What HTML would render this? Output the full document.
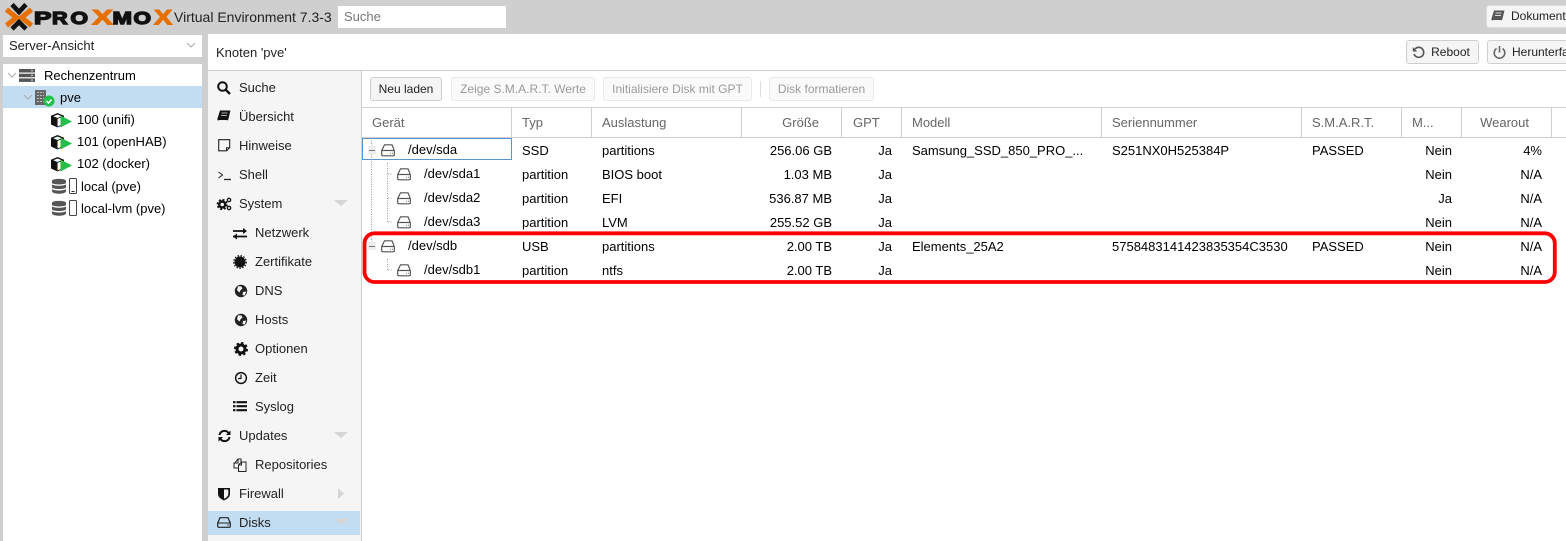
<!DOCTYPE html>
<html><head><meta charset="utf-8"><style>
html,body{margin:0;padding:0}
body{width:1566px;height:541px;overflow:hidden;position:relative;background:#cfcfcf;font:13px "Liberation Sans",sans-serif;color:#000}
.b{position:absolute;box-sizing:border-box}
.t{position:absolute;white-space:nowrap;height:20px;line-height:20px;margin-top:1px}
.r{text-align:right}
.h{color:#666}
.n{color:#222}
.btn{position:absolute;box-sizing:border-box;height:24px;border:1px solid #cfcfcf;border-radius:3px;background:#f5f5f5;line-height:22px;text-align:center;color:#222;white-space:nowrap;overflow:hidden;font-size:12px}
.dis{border-color:#e9e9e9;background:#fafafa;color:#9a9a9a}
svg{position:absolute;overflow:visible}
.sep{position:absolute;top:108px;width:1px;height:29px;background:#cfcfcf}
</style></head><body>
<svg width="0" height="0" style="position:absolute"><defs>
<g id="hdd" fill="none" stroke="#555" stroke-width="1.200"><path d="M3.500 .8h7.500l2.300 5.700v4.300a1 1 0 0 1-1 1H1.700a1 1 0 0 1-1-1V6.500z"/><path d="M.7 6.500h12.600"/><path d="M9 9.300h1M11 9.300h1" stroke="#888"/></g>
<g id="vm"><path d="M6.500 0l6.500 2.800v8.700l-6.500 3-6.500-3V2.800z" fill="#111"/><path d="M6.500 1.500l4.200 1.700-4.200 1.800-4.200-1.800z" fill="#fff"/><path d="M7 5.800l3.500-1.500v7.500L7 13.300z" fill="#fff"/><path d="M6.400 5.600v8" stroke="#c98a1e" stroke-width=".9"/><path d="M9.500 2.500l11.500 6-11.500 6z" fill="#21bf4b"/></g>
<g id="db"><path d="M0 2.800C0 .2 14 .2 14 2.800v2C14 7 0 7 0 4.800z" fill="#555"/><path d="M0 6.300C1 8.300 13 8.300 14 6.300v3.200C13 11.500 1 11.500 0 9.500z" fill="#555"/><path d="M0 11C1 13 13 13 14 11v2.500C13 16.500 1 16.500 0 13.500z" fill="#555"/><rect x="17.500" y=".5" width="7" height="15" rx="1" fill="#fff" stroke="#444"/></g>
<path id="chev" d="M0 0l4 4 4-4" fill="none" stroke="#aaa" stroke-width="1"/>
<g id="globe"><circle cx="7" cy="7" r="6.200" fill="#222"/><path d="M4 2.200l3.500.3 1 2-2 1.800-1 2.200-2.500-2.300zM9 8l3.300-.5-1.700 4L8.500 11z" fill="#f5f5f5"/></g>
<path id="tri" d="M0 0h14l-7 6z" fill="#d5d5d5"/>
</defs></svg>

<!-- logo -->
<svg style="left:0;top:0" width="176" height="34" viewBox="0 0 176 34">
<path d="M12 4.500l7 7.500 7-7.500M12 29l7-7 7 7" fill="none" stroke="#111" stroke-width="4.600"/>
<path d="M6.500 9.500l10 8-10 8M31.500 9.500l-10 8 10 8" fill="none" stroke="#e57000" stroke-width="5"/>
<g font-family="Liberation Sans" font-weight="700" fill="#111" stroke="#111" stroke-width="1.400">
<text transform="translate(34 24) scale(1.450 1)" font-size="18">P</text>
<text transform="translate(52 24) scale(1.200 1)" font-size="18">R</text>
<text transform="translate(70.500 24) scale(1.250 1)" font-size="18">O</text>
<text transform="translate(92 24.500) scale(1.500 1)" font-size="21" fill="#e57000" stroke="#e57000" stroke-width="1">X</text>
<text transform="translate(112.500 24) scale(1.300 1)" font-size="18">M</text>
<text transform="translate(133.500 24) scale(1.250 1)" font-size="18">O</text>
<text transform="translate(154 24.500) scale(1.300 1)" font-size="21" fill="#e57000" stroke="#e57000" stroke-width="1">X</text>
</g>
</svg>
<div class="t" style="left:174px;top:6px;color:#222;font-size:14px">Virtual Environment 7.3-3</div>
<div class="b" style="left:338px;top:6px;width:168px;height:22px;background:#fff"></div>
<div class="t" style="left:344px;top:6px;color:#777">Suche</div>

<div class="btn" style="left:1486px;top:5px;width:90px;height:23px;border-color:#ddd;text-align:left;padding-left:24px;line-height:21px">Dokumentation</div>
<svg style="left:1491px;top:10px" width="14" height="13" viewBox="0 0 14 13"><path d="M3 .5h10.500L11 10.500H1.500q-1.500 0-1-2z" fill="#555"/><path d="M1.800 10.500h8.700" stroke="#eee"/><path d="M4.500 3h6M4 5.500h6" stroke="#ddd"/></svg>

<!-- left -->
<div class="b" style="left:3px;top:35px;width:199px;height:22px;background:#fff"></div>
<div class="t" style="left:9px;top:35px;color:#222">Server-Ansicht</div>
<svg style="left:187px;top:43px" width="8" height="5"><use href="#chev"/></svg>
<div class="b" style="left:3px;top:64px;width:199px;height:477px;background:#fff"></div>
<div class="b" style="left:3px;top:86px;width:199px;height:22px;background:#c2ddf2"></div>
<svg style="left:8px;top:73px" width="8" height="5"><use href="#chev"/></svg>
<svg style="left:24px;top:95px" width="8" height="5"><use href="#chev"/></svg>
<svg style="left:19px;top:69px" width="16" height="13"><rect width="16" height="3.500" fill="#555"/><rect y="4.700" width="16" height="3.500" fill="#555"/><rect y="9.400" width="16" height="3.500" fill="#555"/><path d="M12 1.700h2M12 6.400h2M12 11.100h2" stroke="#ddd"/></svg>
<div class="t" style="left:44px;top:65px">Rechenzentrum</div>
<svg style="left:35px;top:90px" width="20" height="17"><rect width="11" height="15" fill="#666"/><path d="M2 2.500h7M2 5.500h7M2 8.500h7M2 11.500h7" stroke="#bbb" stroke-dasharray="2 1"/><circle cx="14" cy="11" r="5.500" fill="#21bf4b"/><path d="M11.500 11l2 2 3-3.500" fill="none" stroke="#fff" stroke-width="1.500"/></svg>
<div class="t" style="left:60px;top:87px">pve</div>
<svg style="left:51px;top:113px" width="21" height="15"><use href="#vm"/></svg>
<div class="t" style="left:77px;top:109px">100 (unifi)</div>
<svg style="left:51px;top:135px" width="21" height="15"><use href="#vm"/></svg>
<div class="t" style="left:77px;top:131px">101 (openHAB)</div>
<svg style="left:51px;top:157px" width="21" height="15"><use href="#vm"/></svg>
<div class="t" style="left:77px;top:153px">102 (docker)</div>
<svg style="left:52px;top:178px" width="26" height="16"><use href="#db"/><path d="M19.500 13.500h3" stroke="#222"/></svg>
<div class="t" style="left:81px;top:176px">local (pve)</div>
<svg style="left:52px;top:200px" width="26" height="16"><use href="#db"/></svg>
<div class="t" style="left:81px;top:198px">local-lvm (pve)</div>

<!-- content -->
<div class="b" style="left:208px;top:34px;width:1358px;height:507px;background:#fff"></div>
<div class="t" style="left:216px;top:42px;color:#222">Knoten 'pve'</div>
<div class="btn" style="left:1406px;top:40px;width:73px;padding-left:16px">Reboot</div>
<svg style="left:1412px;top:46px" width="13" height="13" viewBox="0 0 13 13"><path d="M3 3a5 5 0 1 1-1 5" fill="none" stroke="#555" stroke-width="1.600"/><path d="M.8 1v4.500h4.500z" fill="#555"/></svg>
<div class="btn" style="left:1487px;top:40px;width:100px;text-align:left;padding-left:24px">Herunterfahren</div>
<svg style="left:1493px;top:46px" width="13" height="13" viewBox="0 0 13 13"><path d="M3.500 2.500a5.300 5.300 0 1 0 6 0" fill="none" stroke="#666" stroke-width="1.600"/><path d="M6.500 0v6.500" stroke="#666" stroke-width="1.600"/></svg>
<div class="b" style="left:208px;top:70px;width:1358px;height:1px;background:#cfcfcf"></div>

<!-- nav -->
<div class="b" style="left:208px;top:71px;width:154px;height:470px;background:#f5f5f5;border-right:1px solid #cfcfcf"></div>
<div class="b" style="left:208px;top:511px;width:152px;height:24px;background:#c2ddf2"></div>
<div class="t n" style="left:239px;top:77px">Suche</div>
<div class="t n" style="left:239px;top:106px">Übersicht</div>
<div class="t n" style="left:239px;top:135px">Hinweise</div>
<div class="t n" style="left:239px;top:164px">Shell</div>
<div class="t n" style="left:239px;top:193px">System</div>
<div class="t n" style="left:255px;top:222px">Netzwerk</div>
<div class="t n" style="left:255px;top:251px">Zertifikate</div>
<div class="t n" style="left:255px;top:280px">DNS</div>
<div class="t n" style="left:255px;top:309px">Hosts</div>
<div class="t n" style="left:255px;top:338px">Optionen</div>
<div class="t n" style="left:255px;top:367px">Zeit</div>
<div class="t n" style="left:255px;top:396px">Syslog</div>
<div class="t n" style="left:239px;top:425px">Updates</div>
<div class="t n" style="left:255px;top:454px">Repositories</div>
<div class="t n" style="left:239px;top:483px">Firewall</div>
<div class="t n" style="left:239px;top:512px">Disks</div>
<!-- nav icons -->
<svg style="left:217px;top:81px" width="14" height="14"><circle cx="5.500" cy="5.500" r="4.300" fill="none" stroke="#111" stroke-width="2"/><path d="M8.500 8.500l4.500 4.500" stroke="#111" stroke-width="2.400"/></svg>
<svg style="left:217px;top:110px" width="14" height="13" viewBox="0 0 14 13"><path d="M3 .5h10.500L11 10.500H1.500q-1.500 0-1-2z" fill="#111"/><path d="M1.800 10.500h8.700" stroke="#eee"/><path d="M4.500 3h6M4 5.500h6" stroke="#aaa"/></svg>
<svg style="left:218px;top:139px" width="13" height="13"><path d="M.7 .7h11v8L8.500 11.800H.7z" fill="none" stroke="#222" stroke-width="1.100"/><path d="M8.500 11.500V8.700h3" fill="none" stroke="#222"/></svg>
<svg style="left:218px;top:171px" width="14" height="10"><path d="M.5 1l4 3-4 3" fill="none" stroke="#222"/><path d="M6 8.500h7" stroke="#222" stroke-width="1.300"/></svg>
<svg style="left:217px;top:197px" width="15" height="14"><circle cx="5.200" cy="7.500" r="3" fill="none" stroke="#111" stroke-width="2.400"/><circle cx="5.200" cy="7.500" r="4.800" fill="none" stroke="#111" stroke-width="1.600" stroke-dasharray="2 1.800"/><circle cx="12" cy="3" r="1.700" fill="none" stroke="#111" stroke-width="1.300"/><circle cx="12" cy="11" r="1.700" fill="none" stroke="#111" stroke-width="1.300"/></svg>
<svg style="left:233px;top:228px" width="14" height="11"><path d="M0 3h11M0 8.500h14" stroke="#111" stroke-width="1.800"/><path d="M10 0l4 3-4 3zM4 5.500L0 8.500l4 3z" fill="#111"/></svg>
<svg style="left:233px;top:255px" width="14" height="14"><circle cx="7" cy="7" r="5.500" fill="#111"/><circle cx="7" cy="7" r="6.300" fill="none" stroke="#111" stroke-width="1.200" stroke-dasharray="1.500 1.500"/></svg>
<svg style="left:234px;top:284px" width="14" height="14"><use href="#globe"/></svg>
<svg style="left:234px;top:313px" width="14" height="14"><use href="#globe"/></svg>
<svg style="left:234px;top:342px" width="14" height="14"><circle cx="7" cy="7" r="4" fill="none" stroke="#111" stroke-width="3"/><circle cx="7" cy="7" r="6" fill="none" stroke="#111" stroke-width="2" stroke-dasharray="2.400 2.300"/></svg>
<svg style="left:234px;top:371px" width="14" height="14"><circle cx="7" cy="7" r="5.400" fill="none" stroke="#111" stroke-width="1.500"/><path d="M7 3.500V7.500H4" fill="none" stroke="#111" stroke-width="1.200"/></svg>
<svg style="left:233px;top:401px" width="14" height="11"><path d="M0 1.200h2.500M3.500 1.200h10.500M0 5.200h2.500M3.500 5.200h10.500M0 9.200h2.500M3.500 9.200h10.500" stroke="#111" stroke-width="2.200"/></svg>
<svg style="left:218px;top:430px" width="13" height="12" viewBox="0 0 13 12"><path d="M1.500 5A5 5 0 0 1 10.500 3M11.500 7A5 5 0 0 1 2.500 9" fill="none" stroke="#111" stroke-width="2"/><path d="M12.500 .5v4.500H8zM.5 11.500V7H5z" fill="#111"/></svg>
<svg style="left:233px;top:458px" width="14" height="14"><path d="M1 6l4-5h3v3M5 1v4H1v5h4" fill="none" stroke="#222"/><path d="M8.500 4h4.500v9.500H5.500V7zM8.500 4v3h-3" fill="#f5f5f5" stroke="#222"/></svg>
<svg style="left:218px;top:487px" width="12" height="14"><path d="M0 1h12v6q0 4-6 6.500Q0 11 0 7z" fill="#111"/><path d="M6 2.500h4.300V7q0 3-4.300 4.800z" fill="#f5f5f5"/></svg>
<svg style="left:217px;top:517px" width="14" height="11" viewBox="0 0 14 11"><path d="M3 .7h8l2.300 5.300v3.300a1 1 0 0 1-1 1H1.700a1 1 0 0 1-1-1V6z" fill="none" stroke="#222" stroke-width="1.200"/><path d="M.7 6h12.600" stroke="#222"/><path d="M10 8h2" stroke="#555"/></svg>
<svg style="left:334px;top:200px" width="14" height="6"><use href="#tri"/></svg>
<svg style="left:334px;top:432px" width="14" height="6"><use href="#tri"/></svg>
<svg style="left:338px;top:488px" width="6" height="12"><path d="M0 0l6 5.500L0 11z" fill="#d5d5d5"/></svg>
<svg style="left:334px;top:519px" width="14" height="6"><use href="#tri"/></svg>

<!-- toolbar -->
<div class="btn" style="left:370px;top:77px;width:72px">Neu laden</div>
<div class="btn dis" style="left:451px;top:77px;width:144px">Zeige S.M.A.R.T. Werte</div>
<div class="btn dis" style="left:603px;top:77px;width:149px">Initialisiere Disk mit GPT</div>
<div class="b" style="left:760px;top:81px;width:1px;height:16px;background:#ddd"></div>
<div class="btn dis" style="left:769px;top:77px;width:105px">Disk formatieren</div>
<div class="b" style="left:362px;top:107px;width:1204px;height:1px;background:#cfcfcf"></div>
<div class="b" style="left:362px;top:137px;width:1204px;height:1px;background:#cfcfcf"></div>

<!-- header -->
<div class="sep" style="left:511px"></div><div class="sep" style="left:591px"></div><div class="sep" style="left:741px"></div><div class="sep" style="left:841px"></div><div class="sep" style="left:901px"></div><div class="sep" style="left:1101px"></div><div class="sep" style="left:1301px"></div><div class="sep" style="left:1401px"></div><div class="sep" style="left:1461px"></div><div class="sep" style="left:1551px"></div>
<div class="t h" style="left:372px;top:112px">Gerät</div>
<div class="t h" style="left:522px;top:112px">Typ</div>
<div class="t h" style="left:602px;top:112px">Auslastung</div>
<div class="t h r" style="left:742px;width:77px;top:112px">Größe</div>
<div class="t h" style="left:853px;top:112px">GPT</div>
<div class="t h" style="left:912px;top:112px">Modell</div>
<div class="t h" style="left:1112px;top:112px">Seriennummer</div>
<div class="t h" style="left:1312px;top:112px">S.M.A.R.T.</div>
<div class="t h" style="left:1412px;top:112px">M...</div>
<div class="t h r" style="left:1462px;width:67px;top:112px">Wearout</div>

<!-- selected row + tree lines -->
<div class="b" style="left:362px;top:138px;width:150px;height:22px;border:1px solid #5897ce"></div>
<svg style="left:362px;top:138px" width="40" height="150">
<path d="M9.500 0v8M9.500 16v88M25.500 25v59M25.500 121v11M26 36h5M26 60h5M26 84h5M26 132h5" fill="none" stroke="#999" stroke-dasharray="1 1.500"/>
<rect x="6" y="8" width="8" height="8" fill="#eee"/><path d="M7 12.500h6" stroke="#777"/>
<rect x="6" y="104" width="8" height="8" fill="#eee"/><path d="M7 108.500h6" stroke="#777"/>
</svg>
<svg style="left:381px;top:144px" width="15" height="13"><use href="#hdd"/></svg>
<svg style="left:397px;top:168px" width="15" height="13"><use href="#hdd"/></svg>
<svg style="left:397px;top:192px" width="15" height="13"><use href="#hdd"/></svg>
<svg style="left:397px;top:216px" width="15" height="13"><use href="#hdd"/></svg>
<svg style="left:381px;top:240px" width="15" height="13"><use href="#hdd"/></svg>
<svg style="left:397px;top:264px" width="15" height="13"><use href="#hdd"/></svg>

<!-- rows -->
<div class="t" style="left:408px;top:139px">/dev/sda</div><div class="t" style="left:522px;top:140px">SSD</div><div class="t" style="left:602px;top:140px">partitions</div><div class="t r" style="left:742px;width:90px;top:140px">256.06 GB</div><div class="t r" style="left:842px;width:50px;top:140px">Ja</div><div class="t" style="left:912px;top:140px">Samsung_SSD_850_PRO_...</div><div class="t" style="left:1112px;top:140px">S251NX0H525384P</div><div class="t" style="left:1312px;top:140px">PASSED</div><div class="t r" style="left:1402px;width:50px;top:140px">Nein</div><div class="t r" style="left:1462px;width:80px;top:140px">4%</div>

<div class="t" style="left:424px;top:163px">/dev/sda1</div><div class="t" style="left:522px;top:164px">partition</div><div class="t" style="left:602px;top:164px">BIOS boot</div><div class="t r" style="left:742px;width:90px;top:164px">1.03 MB</div><div class="t r" style="left:842px;width:50px;top:164px">Ja</div><div class="t r" style="left:1402px;width:50px;top:164px">Nein</div><div class="t r" style="left:1462px;width:80px;top:164px">N/A</div>

<div class="t" style="left:424px;top:187px">/dev/sda2</div><div class="t" style="left:522px;top:188px">partition</div><div class="t" style="left:602px;top:188px">EFI</div><div class="t r" style="left:742px;width:90px;top:188px">536.87 MB</div><div class="t r" style="left:842px;width:50px;top:188px">Ja</div><div class="t r" style="left:1402px;width:50px;top:188px">Ja</div><div class="t r" style="left:1462px;width:80px;top:188px">N/A</div>

<div class="t" style="left:424px;top:211px">/dev/sda3</div><div class="t" style="left:522px;top:212px">partition</div><div class="t" style="left:602px;top:212px">LVM</div><div class="t r" style="left:742px;width:90px;top:212px">255.52 GB</div><div class="t r" style="left:842px;width:50px;top:212px">Ja</div><div class="t r" style="left:1402px;width:50px;top:212px">Nein</div><div class="t r" style="left:1462px;width:80px;top:212px">N/A</div>

<div class="t" style="left:408px;top:235px">/dev/sdb</div><div class="t" style="left:522px;top:236px">USB</div><div class="t" style="left:602px;top:236px">partitions</div><div class="t r" style="left:742px;width:90px;top:236px">2.00 TB</div><div class="t r" style="left:842px;width:50px;top:236px">Ja</div><div class="t" style="left:912px;top:236px">Elements_25A2</div><div class="t" style="left:1112px;top:236px">575848314142383535​4C3530</div><div class="t" style="left:1312px;top:236px">PASSED</div><div class="t r" style="left:1402px;width:50px;top:236px">Nein</div><div class="t r" style="left:1462px;width:80px;top:236px">N/A</div>

<div class="t" style="left:424px;top:259px">/dev/sdb1</div><div class="t" style="left:522px;top:260px">partition</div><div class="t" style="left:602px;top:260px">ntfs</div><div class="t r" style="left:742px;width:90px;top:260px">2.00 TB</div><div class="t r" style="left:842px;width:50px;top:260px">Ja</div><div class="t r" style="left:1402px;width:50px;top:260px">Nein</div><div class="t r" style="left:1462px;width:80px;top:260px">N/A</div>

<!-- red annotation -->
<svg style="left:0;top:0" width="1566" height="541"><rect x="364.500" y="233.300" width="1190.300" height="48.700" rx="10" fill="none" stroke="#f00" stroke-width="3.800"/></svg>
</body></html>
